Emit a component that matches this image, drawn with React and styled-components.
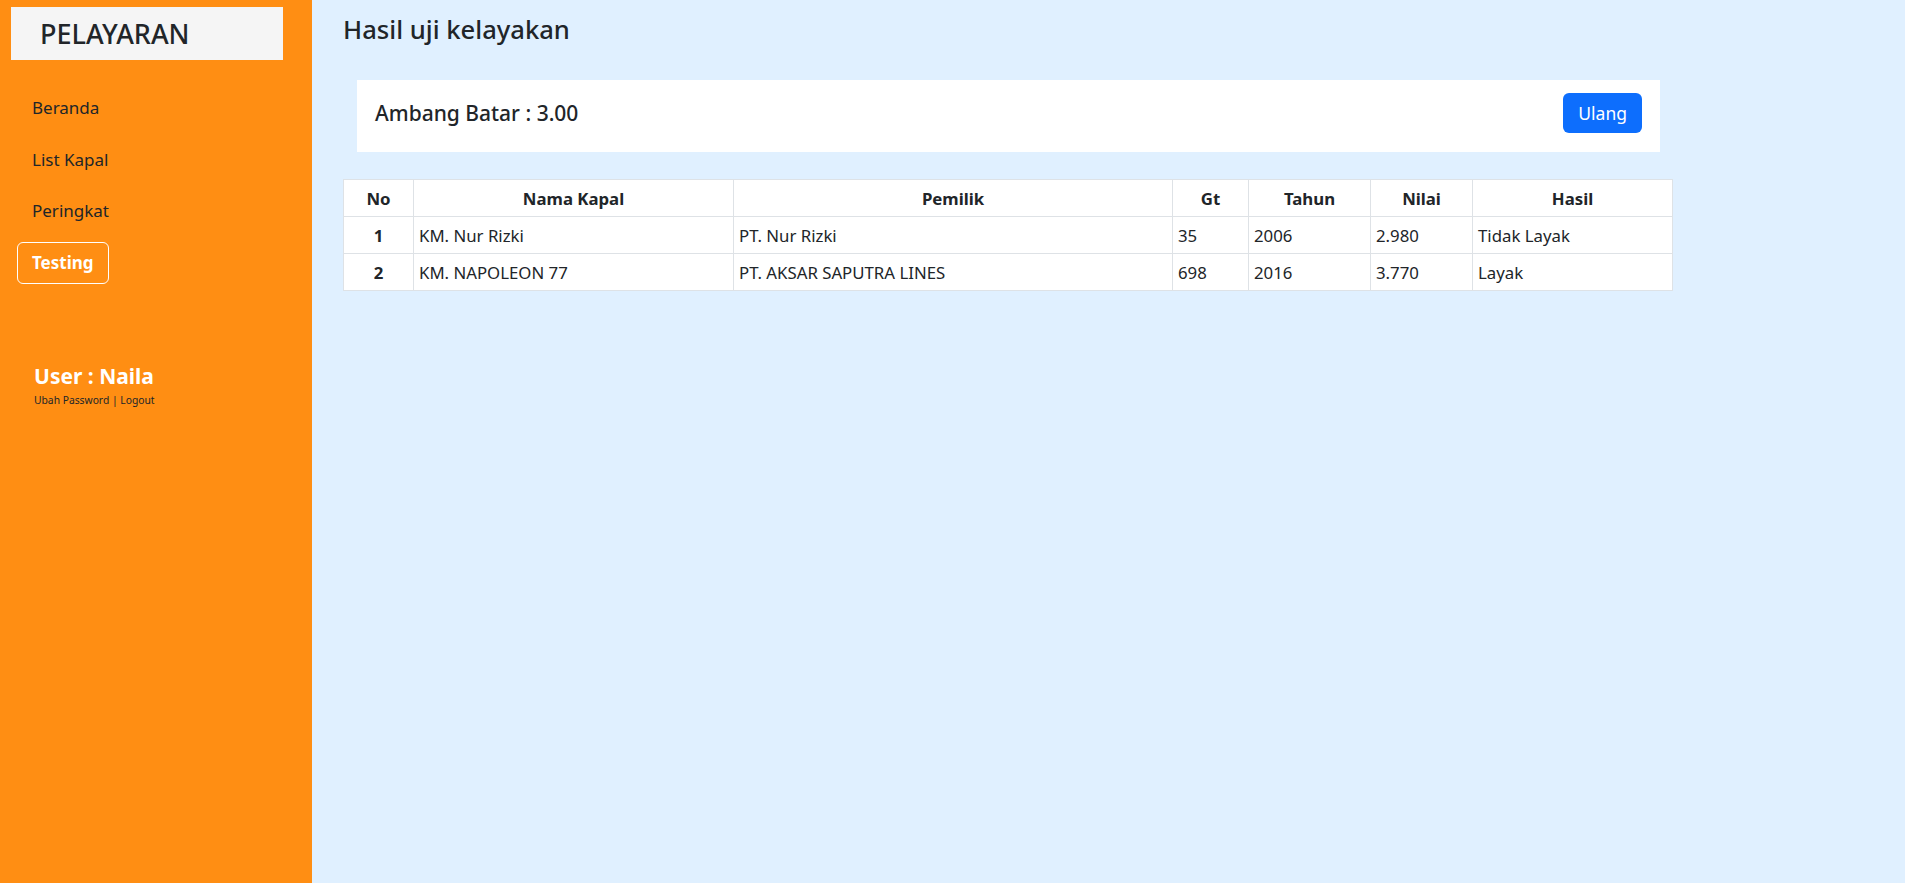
import React from "react";
import styled, { createGlobalStyle } from "styled-components";

const Global = createGlobalStyle`
  html, body { margin: 0; padding: 0; }
  body {
    font-family: "Noto Sans", "Open Sans", sans-serif;
    background: #e0f0ff;
    color: #212529;
  }
  * { box-sizing: border-box; }
`;

const Layout = styled.div`
  display: flex;
  min-height: 883px;
`;

const Sidebar = styled.aside`
  width: 312px;
  flex-shrink: 0;
  background: #ff8e13;
  min-height: 883px;
  padding: 7px 0 0 0;
  display: flex;
  flex-direction: column;
`;

const Brand = styled.div`
  margin-left: 11px;
  width: 272px;
  height: 53px;
  background: #f5f5f5;
  padding-left: 29px;
  display: flex;
  align-items: center;
  font-size: 27px;
  font-weight: 500;
  color: #212529;
`;

const Nav = styled.nav`
  display: flex;
  flex-direction: column;
  align-items: flex-start;
  gap: 9.5px;
  padding: 27px 0 0 17px;
`;

const NavLink = styled.a`
  display: block;
  height: 42px;
  line-height: 40px;
  padding: 0 14px;
  border: 1px solid ${(p) => (p.$active ? "#fff" : "transparent")};
  border-radius: 6px;
  font-size: 17px;
  font-weight: ${(p) => (p.$active ? 700 : 400)};
  color: ${(p) => (p.$active ? "#fff" : "#212529")};
  text-decoration: none;
  cursor: pointer;
`;

const UserBlock = styled.div`
  padding: 78px 0 0 34px;
`;

const UserName = styled.div`
  font-size: 21px;
  font-weight: 700;
  color: #fff;
  line-height: 28px;
`;

const UserLinks = styled.div`
  font-size: 10.3px;
  color: #212529;
  margin-top: 3px;
`;

const Main = styled.main`
  flex: 1;
  padding: 13px 0 0 31px;
`;

const Title = styled.h3`
  margin: 0;
  font-size: 25.6px;
  font-weight: 500;
  line-height: 34px;
`;

const Card = styled.div`
  margin: 33px 0 0 14px;
  width: 1303px;
  height: 72px;
  background: #fff;
  padding: 13px 18px 0;
  display: flex;
  align-items: flex-start;
  justify-content: space-between;
`;

const CardTitle = styled.h5`
  margin: 0;
  font-size: 21px;
  font-weight: 500;
  line-height: 40px;
`;

const Button = styled.button`
  height: 40px;
  padding: 0 15px;
  border: none;
  border-radius: 6px;
  background: #0d6efd;
  color: #fff;
  font-family: inherit;
  font-size: 17.5px;
  cursor: pointer;
`;

const Table = styled.table`
  margin-top: 27px;
  width: 1329px;
  border-collapse: collapse;
  background: #fff;
  font-size: 16.8px;
  table-layout: fixed;
`;

const Th = styled.th`
  border: 1px solid #dee2e6;
  height: 37px;
  padding: 0 5px;
  font-weight: 700;
  text-align: center;
`;

const Td = styled.td`
  border: 1px solid #dee2e6;
  height: 37px;
  padding: 0 5px;
  text-align: ${(p) => (p.$center ? "center" : "left")};
  font-weight: ${(p) => (p.$bold ? 700 : 400)};
`;

const columns = [
  { label: "No", w: 70 },
  { label: "Nama Kapal", w: 320 },
  { label: "Pemilik", w: 439 },
  { label: "Gt", w: 76 },
  { label: "Tahun", w: 122 },
  { label: "Nilai", w: 102 },
  { label: "Hasil", w: 200 },
];

const rows = [
  ["1", "KM. Nur Rizki", "PT. Nur Rizki", "35", "2006", "2.980", "Tidak Layak"],
  ["2", "KM. NAPOLEON 77", "PT. AKSAR SAPUTRA LINES", "698", "2016", "3.770", "Layak"],
];

export default function App() {
  return (
    <>
      <Global />
      <Layout>
        <Sidebar>
          <Brand>PELAYARAN</Brand>
          <Nav>
            <NavLink>Beranda</NavLink>
            <NavLink>List Kapal</NavLink>
            <NavLink>Peringkat</NavLink>
            <NavLink $active>Testing</NavLink>
          </Nav>
          <UserBlock>
            <UserName>User : Naila</UserName>
            <UserLinks>Ubah Password | Logout</UserLinks>
          </UserBlock>
        </Sidebar>
        <Main>
          <Title>Hasil uji kelayakan</Title>
          <Card>
            <CardTitle>Ambang Batar : 3.00</CardTitle>
            <Button>Ulang</Button>
          </Card>
          <Table>
            <colgroup>
              {columns.map((c) => (
                <col key={c.label} style={{ width: c.w }} />
              ))}
            </colgroup>
            <thead>
              <tr>
                {columns.map((c) => (
                  <Th key={c.label}>{c.label}</Th>
                ))}
              </tr>
            </thead>
            <tbody>
              {rows.map((r) => (
                <tr key={r[0]}>
                  {r.map((v, i) => (
                    <Td key={i} $center={i === 0} $bold={i === 0}>
                      {v}
                    </Td>
                  ))}
                </tr>
              ))}
            </tbody>
          </Table>
        </Main>
      </Layout>
    </>
  );
}
